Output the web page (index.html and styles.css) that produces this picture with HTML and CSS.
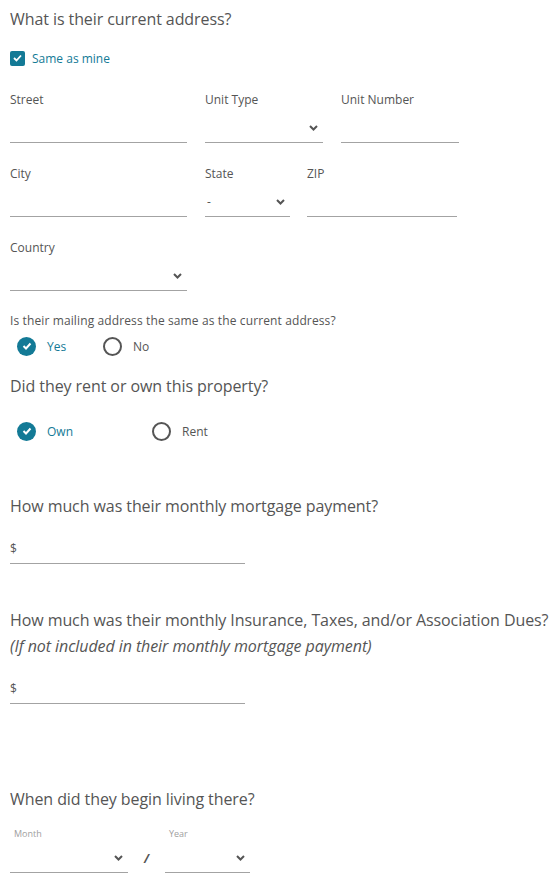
FILE: index.html
```html
<!DOCTYPE html>
<html>
<head>
<meta charset="utf-8">
<link rel="stylesheet" href="styles.css">
</head>
<body>
<div class="form">
  <h2 class="q">What is their current address?</h2>
  <label class="check"><span class="box"><svg width="9" height="8" viewBox="0 0 9 8"><polyline points="1,4 3.5,6.5 8,1.5" fill="none" stroke="#fff" stroke-width="1.8"/></svg></span>Same as mine</label>

  <div class="row row-first">
    <div class="field w-street"><div class="lbl">Street</div><div class="input"></div></div>
    <div class="field w-unit"><div class="lbl">Unit Type</div><div class="input select"><span></span><svg class="chev" width="9" height="6" viewBox="0 0 9 6"><polyline points="1,1 4.5,4.5 8,1" fill="none" stroke="#555" stroke-width="2"/></svg></div></div>
    <div class="field w-unit"><div class="lbl">Unit Number</div><div class="input"></div></div>
  </div>

  <div class="row">
    <div class="field w-street"><div class="lbl">City</div><div class="input"></div></div>
    <div class="field w-state"><div class="lbl">State</div><div class="input select"><span class="val">-</span><svg class="chev" width="9" height="6" viewBox="0 0 9 6"><polyline points="1,1 4.5,4.5 8,1" fill="none" stroke="#555" stroke-width="2"/></svg></div></div>
    <div class="field w-zip"><div class="lbl">ZIP</div><div class="input"></div></div>
  </div>

  <div class="row">
    <div class="field w-street"><div class="lbl">Country</div><div class="input select"><span></span><svg class="chev" width="9" height="6" viewBox="0 0 9 6"><polyline points="1,1 4.5,4.5 8,1" fill="none" stroke="#555" stroke-width="2"/></svg></div></div>
  </div>

  <p class="sub">Is their mailing address the same as the current address?</p>
  <div class="radios radios-mail">
    <div class="radio on w-yes"><span class="dot"><svg width="10" height="8" viewBox="0 0 10 8"><polyline points="1.5,4 4,6.5 8.5,1.5" fill="none" stroke="#fff" stroke-width="2"/></svg></span>Yes</div>
    <div class="radio"><span class="ring"></span>No</div>
  </div>

  <h2 class="q q-rent">Did they rent or own this property?</h2>
  <div class="radios radios-own">
    <div class="radio on w-own"><span class="dot"><svg width="10" height="8" viewBox="0 0 10 8"><polyline points="1.5,4 4,6.5 8.5,1.5" fill="none" stroke="#fff" stroke-width="2"/></svg></span>Own</div>
    <div class="radio"><span class="ring"></span>Rent</div>
  </div>

  <h2 class="q q-mort">How much was their monthly mortgage payment?</h2>
  <div class="input money"><span class="val">$</span></div>

  <h2 class="q q-ins">How much was their monthly Insurance, Taxes, and/or Association Dues?<em class="note">(If not included in their monthly mortgage payment)</em></h2>
  <div class="input money"><span class="val">$</span></div>

  <h2 class="q q-when">When did they begin living there?</h2>
  <div class="date">
    <div class="field w-month"><div class="tiny">Month</div><div class="input select date-in"><span></span><svg class="chev" width="9" height="6" viewBox="0 0 9 6"><polyline points="1,1 4.5,4.5 8,1" fill="none" stroke="#555" stroke-width="2"/></svg></div></div>
    <div class="slash">/</div>
    <div class="field w-year"><div class="tiny">Year</div><div class="input select date-in"><span></span><svg class="chev" width="9" height="6" viewBox="0 0 9 6"><polyline points="1,1 4.5,4.5 8,1" fill="none" stroke="#555" stroke-width="2"/></svg></div></div>
  </div>
</div>
</body>
</html>
```

FILE: styles.css
```css
body {
  margin: 0;
  background: #fff;
  font-family: "Open Sans", "Noto Sans", sans-serif;
  color: #555;
}
.form {
  padding: 8px 10px 0 10px;
}
.q {
  margin: 0;
  font-size: 16px;
  line-height: 22px;
  font-weight: 400;
  color: #555;
  letter-spacing: -0.08px;
  white-space: nowrap;
}
.check {
  display: flex;
  align-items: center;
  gap: 7px;
  margin-top: 20px;
  height: 16px;
  font-size: 12px;
  color: #137a96;
}
.box {
  width: 15px;
  height: 15px;
  border-radius: 2px;
  background: #137a96;
  display: flex;
  align-items: center;
  justify-content: center;
}
.row {
  display: flex;
  gap: 18px;
  margin-top: 23px;
}
.row-first {
  margin-top: 26px;
}
.lbl {
  font-size: 12px;
  line-height: 15px;
}
.input {
  height: 29px;
  margin-top: 6px;
  border-bottom: 1px solid #a3a3a3;
  display: flex;
  align-items: center;
  justify-content: space-between;
  padding: 0 5px 0 0;
  box-sizing: content-box;
  font-size: 12px;
}
.input .val {
  padding-left: 2px;
}
.w-street { width: 177px; }
.w-unit { width: 118px; }
.w-state { width: 85px; }
.w-zip { width: 150px; margin-left: -1px; }
.sub {
  margin: 22px 0 0 0;
  font-size: 12px;
  line-height: 15px;
  letter-spacing: 0.12px;
}
.radios {
  display: flex;
  height: 20px;
  padding-left: 7px;
}
.radios-mail { margin-top: 8px; }
.radios-own { margin-top: 24px; }
.radio {
  display: flex;
  align-items: center;
  gap: 11px;
  font-size: 12px;
  color: #555;
}
.radio.on { color: #137a96; }
.w-yes { width: 86px; }
.w-own { width: 135px; }
.dot {
  width: 19px;
  height: 19px;
  border-radius: 50%;
  background: #137a96;
  display: flex;
  align-items: center;
  justify-content: center;
}
.ring {
  width: 15px;
  height: 15px;
  border-radius: 50%;
  border: 2px solid #555;
}
.q-rent { margin-top: 19px; }
.q-mort { margin-top: 54px; }
.q-ins { margin-top: 45px; }
.q-when { margin-top: 84px; }
.note {
  display: block;
  margin-top: 4px;
  font-style: italic;
}
.money {
  width: 235px;
  margin-top: 17px;
  padding: 0;
}
.money .val { padding-left: 0; }
.date {
  display: flex;
  align-items: flex-end;
  margin-top: 18px;
}
.tiny {
  font-size: 9px;
  line-height: 12px;
  color: #a0a0a0;
  padding-left: 4px;
}
.date-in {
  height: 29px;
  padding-top: 3px;
  margin-top: 0;
}
.w-month { width: 118px; }
.w-year { width: 85px; }
.slash {
  width: 37px;
  height: 32px;
  padding-top: 3px;
  box-sizing: border-box;
  display: flex;
  align-items: center;
  justify-content: center;
  font-size: 12px;
  font-weight: 700;
  font-style: italic;
  color: #555;
}
```
